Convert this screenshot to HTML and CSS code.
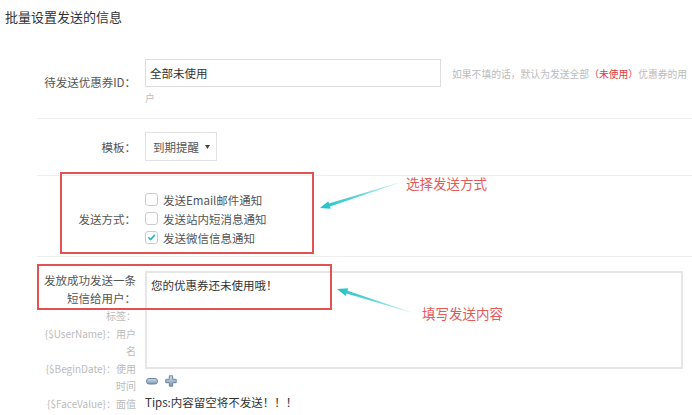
FILE: index.html
```html
<!DOCTYPE html>
<html lang="zh-CN">
<head>
    <meta charset="UTF-8">
    <title>批量设置发送的信息</title>
    <link rel="stylesheet" href="styles.css">
</head>
<body>
<div class="page">

    <h3 class="title">批量设置发送的信息</h3>

    <div class="form">
        <!-- 优惠券 -->
        <div class="row row-id">
            <label class="lbl">待发送优惠券ID：</label>
            <div class="ctl ctl-id">
                <input class="txt" type="text" value="全部未使用"><span class="help">如果不填的话，默认为发送全部<em>（未使用）</em>优惠券的用户</span>
            </div>
        </div>

        <!-- 模板 -->
        <div class="row row-mid">
            <label class="lbl">模板：</label>
            <div class="ctl">
                <span class="sel">到期提醒
                    <svg width="5" height="4" viewBox="0 0 5 4"><path d="M0 0H5L2.5 4Z" fill="#444"/></svg>
                </span>
            </div>
        </div>

        <!-- 发送方式 -->
        <div class="row row-mid row-way">
            <label class="lbl">发送方式：</label>
            <div class="ctl">
                <div class="check"><span class="cb"></span>发送Email邮件通知</div>
                <div class="check"><span class="cb"></span>发送站内短消息通知</div>
                <div class="check"><span class="cb on">
                    <svg width="9" height="9" viewBox="0 0 9 9"><path d="M1.8 4.8L3.6 6.6L7.4 2.4" fill="none" stroke="#2bb8b4" stroke-width="1.6" stroke-linecap="round" stroke-linejoin="round"/></svg>
                </span>发送微信信息通知</div>
            </div>
        </div>

        <!-- 内容 -->
        <div class="row row-msg">
            <label class="lbl lbl-msg">发放成功发送一条短信给用户：
                <span class="tags">
                    <span>标签：</span>
                    <span>{$UserName}：用户名</span>
                    <span>{$BeginDate}：使用时间</span>
                    <span>{$FaceValue}：面值</span>
                </span>
            </label>
            <div class="ctl">
                <textarea class="area">您的优惠券还未使用哦！</textarea>
                <div class="tools">
                    <svg width="12" height="7" viewBox="0 0 12 7">
                        <defs>
                            <linearGradient id="g1" x1="0" y1="0" x2="0" y2="1">
                                <stop offset="0" stop-color="#d3dfea"/>
                                <stop offset="1" stop-color="#7d97b0"/>
                            </linearGradient>
                        </defs>
                        <rect x="0.5" y="0.5" width="11" height="5.5" rx="2.5" fill="url(#g1)" stroke="#6d86a0"/>
                    </svg>
                    <svg width="12" height="12" viewBox="0 0 12 12">
                        <path d="M4.3 0.8H7.7V4.3H11.2V7.7H7.7V11.2H4.3V7.7H0.8V4.3H4.3Z" fill="url(#g1)" stroke="#6d86a0" stroke-linejoin="round"/>
                    </svg>
                </div>
                <p class="tips">Tips:内容留空将不发送！！！</p>
            </div>
        </div>
    </div>

    <!-- 标注 -->
    <svg class="marks" width="692" height="415" viewBox="0 0 692 415">
        <defs>
            <linearGradient id="a1" gradientUnits="userSpaceOnUse" x1="398" y1="183" x2="320" y2="208">
                <stop offset="0" stop-color="#d4f4f4"/>
                <stop offset="0.5" stop-color="#5fd6d8"/>
                <stop offset="1" stop-color="#1fc2c6"/>
            </linearGradient>
            <linearGradient id="a2" gradientUnits="userSpaceOnUse" x1="410" y1="312" x2="337" y2="289">
                <stop offset="0" stop-color="#d4f4f4"/>
                <stop offset="0.5" stop-color="#5fd6d8"/>
                <stop offset="1" stop-color="#1fc2c6"/>
            </linearGradient>
        </defs>
        <rect x="61" y="173" width="252" height="80" fill="none" stroke="#e25252" stroke-width="2"/>
        <rect x="38" y="265" width="293" height="44" fill="none" stroke="#e25252" stroke-width="2"/>
        <polygon points="398.1,183.3 330,206.4 330.7,208.8 320,208 328.3,201.2 329,203.6 397.9,182.7" fill="url(#a1)"/>
        <polygon points="409.9,312.3 346.6,293.5 345.8,295.9 337,289 348.2,288.3 347.5,290.7 410.1,311.7" fill="url(#a2)"/>
    </svg>
    <span class="note note-way">选择发送方式</span>
    <span class="note note-msg">填写发送内容</span>

</div>
</body>
</html>
```

FILE: styles.css
```css
/* 基础 */
body {
    margin: 0;
    font-family: "Noto Sans CJK SC", "Liberation Sans", sans-serif;
    color: #555;
    background: #fff;
    text-spacing-trim: space-all;
}
.page {
    position: relative;
    width: 692px;
    height: 415px;
    overflow: hidden;
}
.title {
    margin: 0;
    padding: 8px 5px 0;
    font-size: 13px;
    line-height: 17px;
    font-weight: normal;
    color: #333;
}
/* 表单行 */
.form {
    margin: 20px 0 0 37px;
}
.row {
    display: flex;
    align-items: flex-start;
    padding: 14px 0 11px;
    border-bottom: 1px solid #eee;
}
.row-mid {
    align-items: center;
    padding: 13px 0 14px;
}
.row-way {
    padding: 14px 0 9px;
}
.row-msg {
    padding: 14px 0 0;
    border-bottom: none;
}
.lbl {
    flex: none;
    width: 94px;
    margin-left: 5px;
    text-align: right;
    font-size: 11.5px;
    line-height: 18px;
    color: #555;
}
.row-id .lbl {
    padding-top: 14px;
}
.ctl {
    flex: 1;
    margin-left: 9px;
    min-width: 0;
}
/* 优惠券ID */
.ctl-id {
    font-size: 9.8px;
    line-height: 18px;
}
.txt {
    width: 296px;
    height: 28px;
    box-sizing: border-box;
    margin: 0 11px 2px 0;
    padding: 0 4px;
    border: 1px solid #dcdcdc;
    font-family: inherit;
    font-size: 11.5px;
    color: #333;
    outline: none;
}
.help {
    color: #bbb;
}
.help em {
    font-style: normal;
    color: #e33b3b;
}
/* 模板 */
.sel {
    display: inline-flex;
    align-items: center;
    justify-content: space-between;
    width: 72px;
    height: 29px;
    box-sizing: border-box;
    padding: 0 6px 0 7px;
    border: 1px solid #e2e2e2;
    font-size: 11.5px;
    color: #555;
}
/* 发送方式 */
.check {
    display: flex;
    align-items: center;
    height: 19px;
    font-size: 11.5px;
    color: #555;
}
.cb {
    display: inline-flex;
    align-items: center;
    justify-content: center;
    width: 13px;
    height: 13px;
    box-sizing: border-box;
    margin-right: 5px;
    border: 1px solid #ccc;
    border-radius: 3px;
    background: #fff;
}
/* 内容 */
.lbl-msg {
    padding-top: 0;
}
.tags {
    display: block;
    font-size: 10px;
    line-height: 17.5px;
    color: #bbb;
}
.tags span {
    display: block;
}
.area {
    display: block;
    width: 538px;
    height: 98px;
    box-sizing: border-box;
    margin: 0;
    padding: 3px 4px;
    border: 2px solid #e6e6e6;
    resize: none;
    font-family: inherit;
    font-size: 11.5px;
    line-height: 18px;
    color: #333;
    outline: none;
}
.tools {
    display: flex;
    align-items: center;
    gap: 7px;
    height: 12px;
    margin: 6px 0 0 1px;
}
.tips {
    margin: 6px 0 0;
    font-size: 11.5px;
    line-height: 18px;
    color: #333;
}
/* 标注 */
.marks {
    position: absolute;
    left: 0;
    top: 0;
    pointer-events: none;
}
.note {
    position: absolute;
    font-size: 13.5px;
    line-height: 18px;
    color: #e65a5a;
}
.note-way {
    left: 406px;
    top: 174px;
}
.note-msg {
    left: 422px;
    top: 304px;
}
```
